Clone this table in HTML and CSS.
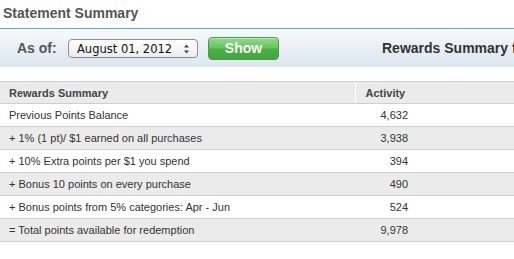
FILE: index.html
```html
<!DOCTYPE html>
<html>
<head>
<meta charset="utf-8">
<link rel="stylesheet" href="styles.css">
</head>
<body>
<div class="page">
  <h1 class="title">Statement Summary</h1>
  <div class="toolbar">
    <span class="asof">As of:</span>
    <div class="select">
      <span class="select-text">August 01, 2012</span>
      <svg class="arrows" width="7" height="10" viewBox="0 0 7 10"><path d="M3.5 0.5 L6 3.5 H1 Z M3.5 9.5 L6 6.5 H1 Z" fill="#444"/></svg>
    </div>
    <button class="show">Show</button>
    <span class="rs-title">Rewards Summary for</span>
  </div>
  <table class="summary">
    <colgroup><col class="w-desc"><col class="w-act"><col></colgroup>
    <thead>
      <tr><th>Rewards Summary</th><th class="c-act">Activity</th><th></th></tr>
    </thead>
    <tbody>
      <tr><td>Previous Points Balance</td><td class="num">4,632</td><td></td></tr>
      <tr class="alt"><td>+ 1% (1 pt)/ $1 earned on all purchases</td><td class="num">3,938</td><td></td></tr>
      <tr><td>+ 10% Extra points per $1 you spend</td><td class="num">394</td><td></td></tr>
      <tr class="alt"><td>+ Bonus 10 points on every purchase</td><td class="num">490</td><td></td></tr>
      <tr><td>+ Bonus points from 5% categories: Apr - Jun</td><td class="num">524</td><td></td></tr>
      <tr class="alt"><td>= Total points available for redemption</td><td class="num">9,978</td><td></td></tr>
    </tbody>
  </table>
</div>
</body>
</html>
```

FILE: styles.css
```css
html, body {
  margin: 0;
  padding: 0;
  background: #fff;
  overflow: hidden;
}
body {
  font-family: "Liberation Sans", Arial, sans-serif;
  color: #333;
  width: 514px;
}
.page {
  width: 514px;
  overflow: hidden;
}
.title {
  margin: 0;
  padding: 4px 0 0 3px;
  height: 24px;
  box-sizing: content-box;
  font-size: 14px;
  font-weight: bold;
  color: #555;
  line-height: 19px;
  border-bottom: 1px solid #5aa8d8;
}
.toolbar {
  height: 38px;
  display: flex;
  align-items: center;
  white-space: nowrap;
  background: linear-gradient(#f7f9fb, #dce5ef);
  padding-left: 17px;
  overflow: hidden;
}
.toolbar > * {
  flex-shrink: 0;
}
.asof {
  font-size: 14px;
  font-weight: bold;
  color: #555;
  width: 51px;
}
.select {
  box-sizing: border-box;
  width: 130px;
  height: 19px;
  border: 1px solid #8d8d8d;
  border-radius: 4px;
  background: linear-gradient(#ffffff, #ececec);
  display: flex;
  align-items: center;
  justify-content: space-between;
  padding: 0 7px 0 8px;
  margin-top: 1px;
}
.select-text {
  font-family: "DejaVu Sans", sans-serif;
  font-size: 11.5px;
  color: #111;
}
.arrows {
  display: block;
}
.show {
  margin-left: 10px;
  width: 71px;
  height: 23px;
  border: 1px solid #449f40;
  border-radius: 4px;
  background: linear-gradient(#95d98f 0%, #66c660 45%, #48af43 55%, #45a640 100%);
  color: #fff;
  font-family: "Liberation Sans", Arial, sans-serif;
  font-size: 14px;
  font-weight: bold;
  padding: 0;
  box-shadow: inset 0 1px 0 rgba(255,255,255,0.45);
}
.rs-title {
  margin-left: 103px;
  font-size: 14px;
  font-weight: bold;
  color: #333;
}
.summary {
  margin-top: 14px;
  width: 514px;
  table-layout: fixed;
  border-collapse: collapse;
  font-size: 11px;
  color: #333;
}
.w-desc { width: 355px; }
.w-act { width: 63px; }
.summary th,
.summary td {
  height: 22px;
  padding: 0 0 0 9px;
  border-top: 1px solid #cfcfcf;
  border-bottom: 1px solid #cfcfcf;
  text-align: left;
  vertical-align: middle;
  white-space: nowrap;
}
.summary th {
  background: #ebebeb;
  font-weight: bold;
  color: #444;
  height: 21px;
}
.summary .c-act { border-left: 1px solid #fff; padding-left: 10px; }
.summary .num { text-align: right; padding: 0 10px 0 0; }
.summary tr.alt td { background: #ebebeb; }
```
